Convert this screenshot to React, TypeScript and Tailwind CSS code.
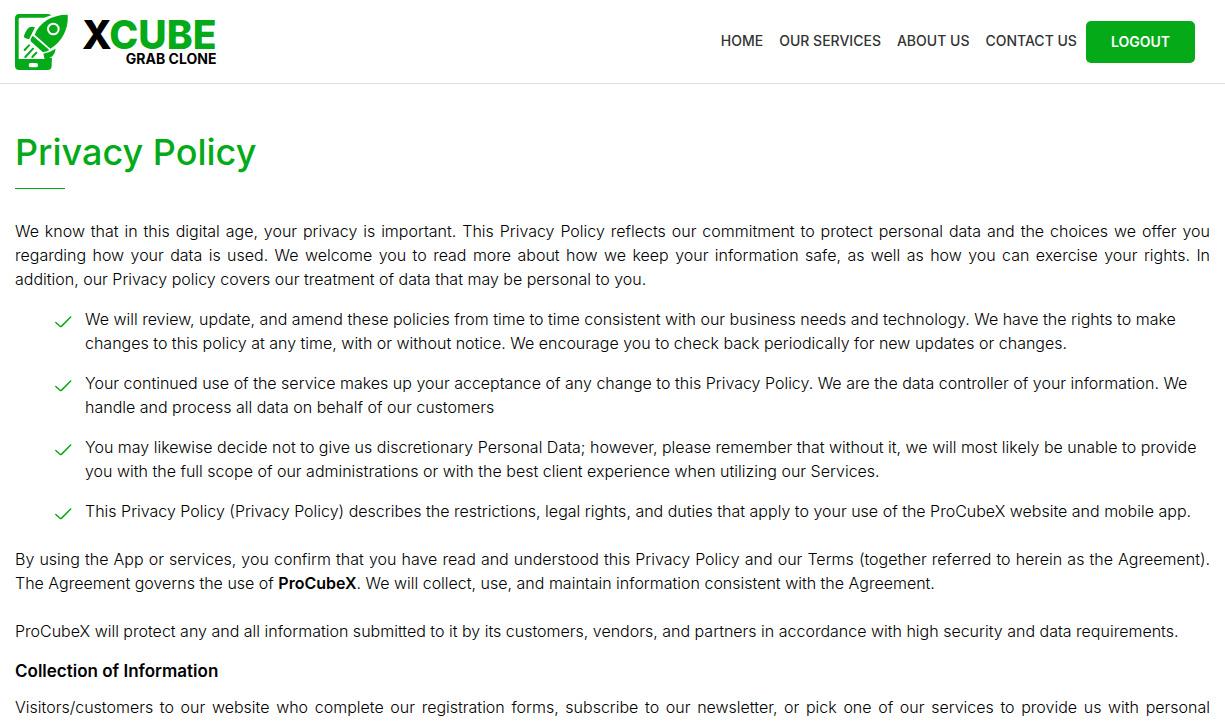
import type { ReactNode } from "react";

type NavLink = {
  label: string;
  href: string;
};

const navLinks: NavLink[] = [
  { label: "Home", href: "#home" },
  { label: "Our Services", href: "#services" },
  { label: "About Us", href: "#about" },
  { label: "Contact Us", href: "#contact" },
];

const policyPoints = [
  "We will review, update, and amend these policies from time to time consistent with our business needs and technology. We have the rights to make changes to this policy at any time, with or without notice. We encourage you to check back periodically for new updates or changes.",
  "Your continued use of the service makes up your acceptance of any change to this Privacy Policy. We are the data controller of your information. We handle and process all data on behalf of our customers",
  "You may likewise decide not to give us discretionary Personal Data; however, please remember that without it, we will most likely be unable to provide you with the full scope of our administrations or with the best client experience when utilizing our Services.",
  "This Privacy Policy (Privacy Policy) describes the restrictions, legal rights, and duties that apply to your use of the ProCubeX website and mobile app.",
];

function RocketPhone() {
  return (
    <svg aria-hidden viewBox="45 42 159 168" className="h-14 w-[53px] shrink-0">
      <path
        fill="#04aa17"
        fillRule="evenodd"
        d="M58 42H143Q155 42 155 54V197Q155 210 142 210H58Q45 210 45 197V55Q45 42 58 42ZM61 53Q56 53 56 58V177H144V53ZM91 189Q86 189 86 195Q86 202 91 202H109Q114 202 114 195Q114 189 109 189Z"
      />
      {/* white gap between the phone frame and the rocket */}
      <path fill="#fff" d="M104 82C118 58 138 50 157 46L170 140L166 173H134L120 150L96 120Z" />
      <g fill="#04aa17">
        <path d="M203 44C206 79 192 121 151 146L104 104C118 66 159 43 203 44Z" />
        <path d="M98 107L148 150Q138 157 128 156L92 124Q91 115 98 107Z" />
        <path d="M88 82Q96 79 105 82L87 118Q78 116 71 111Q76 92 88 82Z" />
        <path d="M130 161Q150 157 167 146Q166 160 157 169Q146 177 134 178Z" />
        <path d="M136 174H155V185H136Z" />
      </g>
      <circle cx="160" cy="87" r="16" fill="none" stroke="#fff" strokeWidth="6" />
      <g stroke="#04aa17" strokeWidth="6" strokeLinecap="round">
        <path d="M87 136L74 150M99 146L76 171M109 158L97 171" />
      </g>
    </svg>
  );
}

function Logo() {
  return (
    <a href="#home" aria-label="XCube Grab Clone" className="flex items-center gap-3.5">
      <RocketPhone />
      <span className="flex flex-col items-end pb-0.5 font-bold uppercase">
        <span className="text-[39px] leading-9 font-extrabold text-[#04aa17]">
          <span className="text-black">X</span>Cube
        </span>
        <span className="text-sm leading-3 text-black">Grab Clone</span>
      </span>
    </a>
  );
}

function CheckItem({ children }: { children: ReactNode }) {
  return (
    <li className="flex gap-3">
      <svg aria-hidden viewBox="0 0 18 24" className="h-6 w-[18px] shrink-0">
        <path
          d="M0.8 15.5L5 19.3Q5.8 19.8 6.6 19.1L15.7 10"
          fill="none"
          stroke="#04aa17"
          strokeWidth="1.5"
          strokeLinecap="round"
          strokeLinejoin="round"
        />
      </svg>
      <span>{children}</span>
    </li>
  );
}

export default function App() {
  return (
    <div className="min-h-screen bg-white font-['Inter','Liberation_Sans',sans-serif] text-black">
      <header className="flex items-center justify-between border-b border-[#dddddd] pt-3.5 pr-[30px] pb-[13px] pl-[15px]">
        <Logo />
        <div className="flex items-center gap-[9px]">
          <nav className="flex gap-4 pb-[3px] text-sm font-medium text-[#333333] uppercase">
            {navLinks.map((link) => (
              <a key={link.label} href={link.href}>
                {link.label}
              </a>
            ))}
          </nav>
          <button type="button" className="rounded-[5px] bg-[#04aa17] px-[25px] py-[11px] text-sm font-semibold text-white uppercase">
            Logout
          </button>
        </div>
      </header>

      <main className="px-[15px] pt-10 text-base leading-6 font-light">
        <h1 className="text-4xl leading-14 font-medium text-[#04aa17]">Privacy Policy</h1>
        <div className="mt-2 w-[50px] border-t border-[#04aa17]" />

        <p className="mt-[30px] text-justify">
          We know that in this digital age, your privacy is important. This Privacy Policy reflects our commitment to
          protect personal data and the choices we offer you regarding how your data is used. We welcome you to read
          more about how we keep your information safe, as well as how you can exercise your rights. In addition, our
          Privacy policy covers our treatment of data that may be personal to you.
        </p>

        <ul className="mt-4 flex flex-col gap-4 pl-10">
          {policyPoints.map((point) => (
            <CheckItem key={point}>{point}</CheckItem>
          ))}
        </ul>

        <p className="mt-6 text-justify">
          By using the App or services, you confirm that you have read and understood this Privacy Policy and our Terms
          (together referred to herein as the Agreement). The Agreement governs the use of{" "}
          <strong className="font-semibold">ProCubeX</strong>. We will collect, use, and maintain information consistent
          with the Agreement.
        </p>
        <p className="mt-6 text-justify">
          ProCubeX will protect any and all information submitted to it by its customers, vendors, and partners in
          accordance with high security and data requirements.
        </p>

        <h2 className="mt-4 text-[17px] leading-6 font-semibold">Collection of Information</h2>
        <p className="mt-3 text-justify [text-align-last:justify]">
          Visitors/customers to our website who complete our registration forms, subscribe to our newsletter, or pick
          one of our services to provide us with personal
        </p>
      </main>
    </div>
  );
}
